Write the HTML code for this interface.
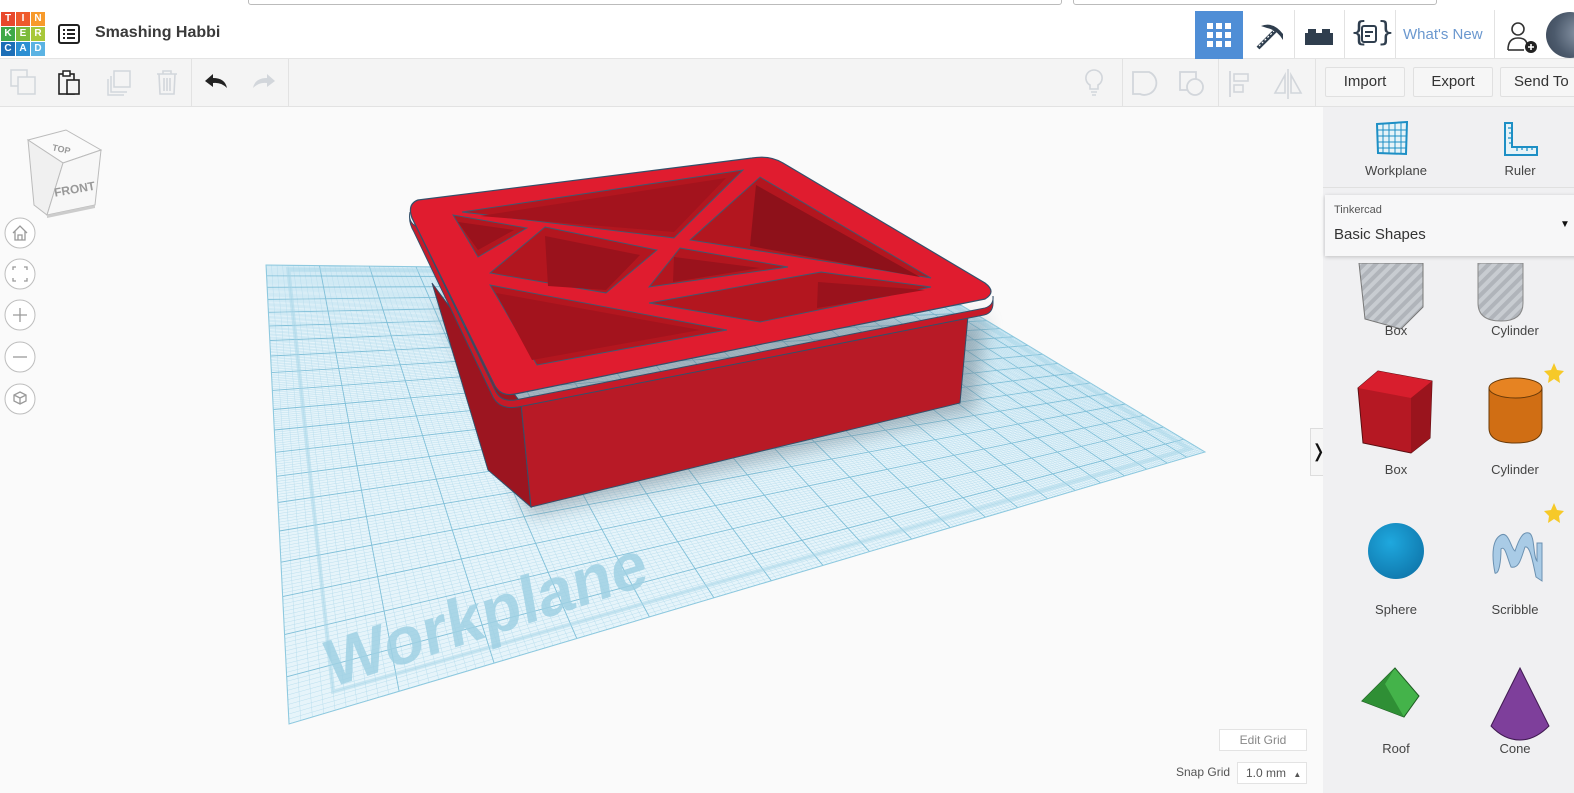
<!DOCTYPE html>
<html><head><meta charset="utf-8">
<style>
*{box-sizing:border-box;margin:0;padding:0}
body{width:1574px;height:793px;overflow:hidden;background:#fafafa;font-family:"Liberation Sans",sans-serif;position:relative}
.abs{position:absolute}
.top{left:0;top:0;width:1574px;height:10px;background:#fff}
.hdr{left:0;top:10px;width:1574px;height:49px;background:#fff;border-bottom:1px solid #e4e4e4}
.tb{left:0;top:59px;width:1574px;height:48px;background:#f4f4f4;border-bottom:1px solid #e2e2e2}
.logo div{position:absolute;width:14px;height:14px;color:#fff;font-size:10px;font-weight:bold;text-align:center;line-height:14px}
.btn{position:absolute;top:8px;height:30px;border:1px solid #e0e0e0;background:#f6f6f6;font-size:15px;color:#333;text-align:center;line-height:28px;border-radius:2px}
.panel{left:1323px;top:107px;width:251px;height:686px;background:#f0f0f2}
.lbl{position:absolute;font-size:13px;color:#444;text-align:center;width:100px}
.sep{position:absolute;width:1px;background:#e2e2e2}
</style></head><body>
<div class="abs top">
  <div class="abs" style="left:248px;top:-6px;width:814px;height:11px;border:1px solid #bbb;border-radius:3px;background:#fff"></div>
  <div class="abs" style="left:1073px;top:-6px;width:364px;height:11px;border:1px solid #bbb;border-radius:3px;background:#fff"></div>
</div>
<div class="abs hdr">
  <div class="abs logo" style="left:1px;top:2px;width:45px;height:45px">
    <div style="left:0;top:0;background:#e8492c">T</div><div style="left:15px;top:0;background:#ef5a2b">I</div><div style="left:30px;top:0;background:#f79a2b">N</div>
    <div style="left:0;top:15px;background:#3fa948">K</div><div style="left:15px;top:15px;background:#7dbb3b">E</div><div style="left:30px;top:15px;background:#a8c83a">R</div>
    <div style="left:0;top:30px;background:#1d6fb7">C</div><div style="left:15px;top:30px;background:#2c8fd2">A</div><div style="left:30px;top:30px;background:#5bb3e3">D</div>
  </div>
  <svg class="abs" style="left:58px;top:14px" width="22" height="20" viewBox="0 0 22 20"><rect x="1" y="1" width="20" height="18" rx="2" fill="none" stroke="#222" stroke-width="2"/><g fill="#222"><rect x="5" y="5" width="2" height="2"/><rect x="9" y="5" width="8" height="2"/><rect x="5" y="9" width="2" height="2"/><rect x="9" y="9" width="8" height="2"/><rect x="5" y="13" width="2" height="2"/><rect x="9" y="13" width="8" height="2"/></g></svg>
  <div class="abs" style="left:95px;top:14px;font-size:16px;font-weight:bold;color:#3a3a3a">Smashing Habbi</div>
  <div class="abs" style="left:1195px;top:1px;width:48px;height:48px;background:#4f8ed6">
    <svg style="position:absolute;left:12px;top:12px" width="24" height="24"><g fill="#fff"><rect x="0" y="0" width="6" height="6"/><rect x="9" y="0" width="6" height="6"/><rect x="18" y="0" width="6" height="6"/><rect x="0" y="9" width="6" height="6"/><rect x="9" y="9" width="6" height="6"/><rect x="18" y="9" width="6" height="6"/><rect x="0" y="18" width="6" height="6"/><rect x="9" y="18" width="6" height="6"/><rect x="18" y="18" width="6" height="6"/></g></svg>
  </div>
  <svg class="abs" style="left:1255px;top:12px" width="32" height="28" viewBox="0 0 32 28"><path d="M3 26 L20 9" stroke="#2f3e4e" stroke-width="4"/><path d="M6 4 Q18 -1 28 12 L28 18 Q22 8 12 6 Z" fill="#2f3e4e"/><path d="M4 24 L19 9" stroke="#fff" stroke-width="1.2" stroke-dasharray="2 2"/></svg>
  <div class="sep" style="left:1294px;top:0;height:48px"></div>
  <svg class="abs" style="left:1305px;top:19px" width="28" height="16"><rect x="0" y="4" width="28" height="12" fill="#2f3e4e"/><rect x="3" y="0" width="8" height="5" fill="#2f3e4e"/><rect x="17" y="0" width="8" height="5" fill="#2f3e4e"/></svg>
  <div class="sep" style="left:1344px;top:0;height:48px"></div>
  <div class="abs" style="left:1350px;top:5px;font-size:28px;color:#2f3e4e;font-family:'DejaVu Sans',sans-serif">{</div>
  <svg class="abs" style="left:1361px;top:15px" width="16" height="18"><rect x="1" y="1" width="14" height="16" rx="2" fill="none" stroke="#2f3e4e" stroke-width="2"/><rect x="4" y="6" width="8" height="2" fill="#2f3e4e"/><rect x="4" y="10" width="5" height="2" fill="#2f3e4e"/></svg>
  <div class="abs" style="left:1377px;top:5px;font-size:28px;color:#2f3e4e;font-family:'DejaVu Sans',sans-serif">}</div>
  <div class="sep" style="left:1395px;top:0;height:48px"></div>
  <div class="abs" style="left:1403px;top:16px;font-size:15px;color:#6b98cf">What's New</div>
  <div class="sep" style="left:1494px;top:0;height:48px"></div>
  <svg class="abs" style="left:1506px;top:10px" width="34" height="34" viewBox="0 0 34 34"><circle cx="12" cy="9" r="6" fill="none" stroke="#333" stroke-width="1.6"/><path d="M2 30 Q2 18 12 18 Q20 18 21 24" fill="none" stroke="#333" stroke-width="1.6"/><path d="M2 30 L18 30" stroke="#333" stroke-width="1.6"/><circle cx="25" cy="27" r="6" fill="#222"/><path d="M25 24v6M22 27h6" stroke="#fff" stroke-width="1.6"/></svg>
  <div class="abs" style="left:1546px;top:2px;width:48px;height:46px;border-radius:50%;background:radial-gradient(circle at 70% 45%,#8a97a8,#4c5a6c 60%,#3a4656)"></div>
</div>
<div class="abs tb">
  <svg class="abs" style="left:10px;top:10px" width="28" height="28"><rect x="1" y="1" width="16" height="16" fill="none" stroke="#d2d6db" stroke-width="1.5"/><rect x="8" y="8" width="17" height="17" fill="#f4f4f4" stroke="#d2d6db" stroke-width="1.5"/></svg>
  <svg class="abs" style="left:57px;top:10px" width="26" height="28"><rect x="2" y="5" width="15" height="20" fill="none" stroke="#222" stroke-width="1.6"/><rect x="6" y="2" width="7" height="5" fill="#fff" stroke="#222" stroke-width="1.5"/><rect x="10" y="11" width="12" height="14" fill="#f4f4f4" stroke="#222" stroke-width="1.6"/></svg>
  <svg class="abs" style="left:104px;top:10px" width="28" height="28"><path d="M4 10 L4 26 L20 26" fill="none" stroke="#d2d6db" stroke-width="1.5"/><path d="M7 7 L7 23 L23 23" fill="none" stroke="#d2d6db" stroke-width="1.5"/><rect x="10" y="2" width="16" height="16" fill="none" stroke="#d2d6db" stroke-width="1.5"/></svg>
  <svg class="abs" style="left:155px;top:9px" width="24" height="28"><path d="M2 6h20M8 6V3h8v3M4 6l1 20h14l1-20M9 10v13M12 10v13M15 10v13" fill="none" stroke="#d2d6db" stroke-width="1.6"/></svg>
  <div class="sep" style="left:191px;top:0;height:47px"></div>
  <svg class="abs" style="left:203px;top:14px" width="26" height="18"><path d="M10 1 L2 8 L10 14 L10 10 Q18 9 24 15 Q22 5 10 5 Z" fill="#222"/></svg>
  <svg class="abs" style="left:251px;top:14px" width="26" height="18"><path d="M16 1 L24 8 L16 14 L16 10 Q8 9 2 15 Q4 5 16 5 Z" fill="#d2d6db"/></svg>
  <div class="sep" style="left:288px;top:0;height:47px"></div>
  <svg class="abs" style="left:1082px;top:9px" width="24" height="30"><path d="M12 2 A8 8 0 0 1 16 17 L16 21 L8 21 L8 17 A8 8 0 0 1 12 2 Z M9 24h6M10 27h4" fill="none" stroke="#d2d6db" stroke-width="1.6"/></svg>
  <div class="sep" style="left:1122px;top:0;height:47px"></div>
  <svg class="abs" style="left:1131px;top:11px" width="28" height="28"><path d="M2 2 H18 A9 9 0 1 1 9 24 H2 Z" fill="none" stroke="#d2d6db" stroke-width="1.8"/></svg>
  <svg class="abs" style="left:1178px;top:11px" width="28" height="28"><rect x="2" y="2" width="16" height="18" fill="none" stroke="#d2d6db" stroke-width="1.8"/><circle cx="17" cy="17" r="8" fill="#f4f4f4" stroke="#d2d6db" stroke-width="1.8"/></svg>
  <div class="sep" style="left:1218px;top:0;height:47px"></div>
  <svg class="abs" style="left:1228px;top:12px" width="26" height="26"><path d="M2 0v26" stroke="#d2d6db" stroke-width="1.8"/><rect x="6" y="3" width="14" height="7" fill="none" stroke="#d2d6db" stroke-width="1.6"/><rect x="6" y="14" width="9" height="7" fill="none" stroke="#d2d6db" stroke-width="1.6"/></svg>
  <svg class="abs" style="left:1272px;top:10px" width="32" height="30"><path d="M16 0v30" stroke="#d2d6db" stroke-width="1.6"/><path d="M13 6 L3 24 L13 24 Z M19 6 L29 24 L19 24 Z" fill="none" stroke="#d2d6db" stroke-width="1.6"/></svg>
  <div class="sep" style="left:1315px;top:0;height:47px"></div>
  <div class="btn" style="left:1325px;width:80px">Import</div>
  <div class="btn" style="left:1413px;width:80px">Export</div>
  <div class="btn" style="left:1500px;width:80px;text-align:left;padding-left:13px">Send To</div>
</div>

<svg class="abs" style="left:0;top:107px" width="1323" height="686" viewBox="0 107 1323 686">
 <defs>
  <filter id="blur" x="-20%" y="-20%" width="140%" height="140%"><feGaussianBlur stdDeviation="9"/></filter>
  <clipPath id="wp"><polygon points="266,265 906,272 1205,452 289,724"/></clipPath>
 </defs>
 <polygon points="266,265 906,272 1205,452 289,724" fill="#e6f4fa"/>
 <g id="grid" clip-path="url(#wp)"></g>
 <polygon points="266,265 906,272 1205,452 289,724" fill="none" stroke="#8ec9df" stroke-width="1"/>
 <text x="0" y="0" transform="translate(330,688) rotate(-18) skewX(-8)" font-family="Liberation Sans" font-weight="bold" font-size="66" fill="#9fd0e3" fill-opacity="0.85">Workplane</text>
 <polygon points="440,300 530,515 975,410 985,320" fill="#6a7a85" opacity="0.5" filter="url(#blur)"/>
 <polygon points="432,283 521,403 531,507 488,470" fill="#9c1520" stroke="#34506a" stroke-width="1"/>
 <polygon points="521,403 968,316 960,403 531,507" fill="#b81a26" stroke="#34506a" stroke-width="1"/>
 <path d="M410,212 Q408,222 416,226 L495,390 Q500,402 515,400 L985,308 Q994,305 993,296 L993,303 Q993,313 984,315 L518,407 Q500,410 493,397 L414,232 Q408,222 410,212Z" fill="#c71a28" stroke="#34506a" stroke-width="1"/>
 <path d="M418,200 L752,158 Q770,155 783,163 L985,283 Q997,292 985,299 L515,394 Q500,397 494,384 L412,218 Q407,204 418,200Z" fill="#e01c2f" stroke="#34506a" stroke-width="1.2"/>
 <g stroke="#3d5a72" stroke-width="0.9">
  <polygon points="462,212 743,170 674,238" fill="#b3161f"/>
  <polygon points="480,216 726,178 674,232" fill="#a3131d" stroke="none"/>
  <polygon points="760,177 931,278 690,240" fill="#b3161f"/>
  <polygon points="756,185 750,246 920,277" fill="#8e111a" stroke="none"/>
  <polygon points="453,215 527,228 478,257" fill="#b3161f"/>
  <polygon points="458,222 514,230 478,250" fill="#9a121c" stroke="none"/>
  <polygon points="545,227 657,250 606,293 490,273" fill="#b3161f"/>
  <polygon points="545,236 548,286 606,290 640,255" fill="#9a121c" stroke="none"/>
  <polygon points="680,248 788,267 649,287" fill="#b3161f"/>
  <polygon points="674,257 673,282 760,268" fill="#9a121c" stroke="none"/>
  <polygon points="821,272 931,287 760,322 649,303" fill="#b3161f"/>
  <polygon points="818,282 817,308 925,290" fill="#9a121c" stroke="none"/>
  <polygon points="490,285 727,330 537,365" fill="#b3161f"/>
  <polygon points="496,293 532,360 700,330" fill="#a3131d" stroke="none"/>
 </g>
 <g>
  <polygon points="28,140 66,130 101,150 63,163" fill="#fafafa" stroke="#bbb"/>
  <polygon points="28,140 63,163 47,215 34,205" fill="#f0f0f0" stroke="#bbb"/>
  <polygon points="63,163 101,150 95,205 47,215" fill="#f7f7f7" stroke="#bbb"/>
  <text x="52" y="152" font-size="9" fill="#999" font-weight="bold" transform="rotate(12 60 150)">TOP</text>
  <text x="54" y="194" font-size="12" fill="#999" font-weight="bold" transform="rotate(-10 70 190)">FRONT</text>
  <polygon points="47,215 95,205 95,208 47,218" fill="#ccc"/>
 </g>
 <g fill="#fff" stroke="#bdbdbd" stroke-width="1">
  <circle cx="20" cy="233" r="15"/><circle cx="20" cy="274" r="15"/><circle cx="20" cy="315" r="15"/><circle cx="20" cy="357" r="15"/><circle cx="20" cy="399" r="15"/>
 </g>
 <g fill="none" stroke="#9a9a9a" stroke-width="1.3">
  <path d="M13 233 L20 226 L27 233 M15 231 V240 H25 V231 M18 240 V235 H22 V240"/>
  <path d="M13 270v-3h3 M24 267h3v3 M27 278v3h-3 M16 281h-3v-3"/>
  <path d="M20 308v14 M13 315h14"/>
  <path d="M13 357h14"/>
  <path d="M20 392 l6 3 v6 l-6 3 l-6 -3 v-6 z M14 395 l6 3 l6 -3 M20 398 v6"/>
 </g>
</svg>

<div class="abs" style="left:1219px;top:729px;width:88px;height:22px;background:#fff;border:1px solid #e3e3e3;font-size:12px;color:#888;text-align:center;line-height:20px">Edit Grid</div>
<div class="abs" style="left:1176px;top:765px;font-size:12px;color:#555">Snap Grid</div>
<div class="abs" style="left:1237px;top:762px;width:70px;height:22px;background:#fff;border:1px solid #e3e3e3;font-size:12px;color:#555;line-height:20px;padding-left:8px">1.0 mm <span style="font-size:8px;margin-left:4px">▲</span></div>
<div class="abs" style="left:1310px;top:428px;width:14px;height:48px;background:#f6f6f6;border:1px solid #ddd;border-right:none;font-size:18px;line-height:44px;text-align:center;color:#111">&#x276D;</div>

<div class="abs panel">
  <svg class="abs" style="left:51px;top:14px" width="36" height="36" viewBox="0 0 36 36"><path d="M3 3 L33 1 L32 33 L4 32 Z" fill="#e6f3f8" stroke="#1d8fc5" stroke-width="2"/><g stroke="#1d8fc5" stroke-width="1"><path d="M3.5 9H33M3.5 15H33M3.5 21H32.5M4 27H32.5M9 2.5V32M15 2V32.5M21 2V32.5M27 1.5V33"/></g></svg>
  <svg class="abs" style="left:180px;top:14px" width="36" height="38" viewBox="0 0 36 38"><path d="M2 2 H9 V26 H34 V34 H2 Z" fill="#e6f3f8" stroke="#1d8fc5" stroke-width="2"/><path d="M9 7H5M9 12H6M9 17H5M9 22H6M14 26v4M19 26v3M24 26v4M29 26v3" stroke="#1d8fc5" stroke-width="1.3"/></svg>
  <div class="lbl" style="left:23px;top:56px">Workplane</div>
  <div class="lbl" style="left:147px;top:56px">Ruler</div>
  <div class="abs" style="left:0;top:80px;width:251px;height:1px;background:#e0e0e0"></div>
  <svg class="abs" style="left:0;top:156px" width="251" height="530">
   <defs>
    <pattern id="st" width="8" height="8" patternUnits="userSpaceOnUse" patternTransform="rotate(45)"><rect width="8" height="8" fill="#b0b4ba"/><rect width="4" height="8" fill="#c8ccd1"/></pattern>
    <radialGradient id="sph" cx="0.4" cy="0.35" r="0.7"><stop offset="0" stop-color="#1fa8de"/><stop offset="1" stop-color="#0f78ad"/></radialGradient>
   </defs>
   <polygon points="36,0 100,0 100,44 78,66 42,56" fill="url(#st)" stroke="#777"/>
   <path d="M155,0 H200 V40 Q200,58 178,58 Q155,58 155,40 Z" fill="url(#st)" stroke="#888"/>
   <polygon points="35,125 55,108 109,118 107,175 88,190 40,180" fill="#b51823" stroke="#5a0e12"/>
   <polygon points="35,125 55,108 109,118 88,135" fill="#d81e2d"/>
   <polygon points="88,135 109,118 107,175 88,190" fill="#9a141d"/>
   <path d="M166,125 V165 Q166,180 192,180 Q219,180 219,165 V125 Z" fill="#d06e14" stroke="#6a3a08"/>
   <ellipse cx="192.5" cy="125" rx="26.5" ry="10" fill="#e68322" stroke="#6a3a08"/>
   <polygon points="231,100 234,107 241,108 236,113 237,120 231,116 225,120 226,113 221,108 228,107" fill="#f6c928"/>
   <polygon points="231,240 234,247 241,248 236,253 237,260 231,256 225,260 226,253 221,248 228,247" fill="#f6c928"/>
   <circle cx="73" cy="288" r="28" fill="url(#sph)"/>
   <g transform="translate(0,36)">
   <path d="M172,274 C168,254 170,240 178,236 C186,232 188,250 192,252 C196,240 200,232 206,234 C212,236 210,258 214,262 V244 H219 V282 L213 278 C210,264 207,246 202,248 C198,260 196,270 188,268 C184,258 182,246 178,250 C178,262 176,276 172,274Z" fill="#a9cbe6" stroke="#6b91b1"/>
   </g>
   <g transform="translate(0,63)">
   <polygon points="39,375 72,342 96,370 81,391" fill="#44b34a" stroke="#1e5a22"/>
   <polygon points="39,375 54,360 72,342 62,358 81,391" fill="#2f8f35"/>
   <path d="M197,342 L226,400 Q212,414 197,414 Q181,414 168,400 Z" fill="#7e3f9b" stroke="#3f1a50"/>
   </g>
  </svg>
  <div class="abs" style="left:2px;top:88px;width:255px;height:61px;background:#f7f7f8;box-shadow:0 1px 4px rgba(0,0,0,.2)">
    <div class="abs" style="left:9px;top:9px;font-size:11px;color:#555">Tinkercad</div>
    <div class="abs" style="left:9px;top:31px;font-size:15px;color:#333">Basic Shapes</div>
    <div class="abs" style="left:235px;top:24px;font-size:10px;color:#111">▼</div>
  </div>
  <div class="lbl" style="left:23px;top:216px">Box</div>
  <div class="lbl" style="left:142px;top:216px">Cylinder</div>
  <div class="lbl" style="left:23px;top:355px">Box</div>
  <div class="lbl" style="left:142px;top:355px">Cylinder</div>
  <div class="lbl" style="left:23px;top:495px">Sphere</div>
  <div class="lbl" style="left:142px;top:495px">Scribble</div>
  <div class="lbl" style="left:23px;top:634px">Roof</div>
  <div class="lbl" style="left:142px;top:634px">Cone</div>
</div>

<script>
(function(){
 var TL=[266,265],TR=[906,272],BR=[1205,452],BL=[289,724];
 function H(){var x0=TL[0],y0=TL[1],x1=TR[0],y1=TR[1],x2=BR[0],y2=BR[1],x3=BL[0],y3=BL[1];
  var dx1=x1-x2,dx2=x3-x2,dx3=x0-x1+x2-x3,dy1=y1-y2,dy2=y3-y2,dy3=y0-y1+y2-y3;
  var den=dx1*dy2-dx2*dy1,g=(dx3*dy2-dx2*dy3)/den,h=(dx1*dy3-dx3*dy1)/den;
  return [x1-x0+g*x1,x3-x0+h*x3,x0,y1-y0+g*y1,y3-y0+h*y3,y0,g,h];}
 var m=H();
 function P(u,v){var w=m[6]*u+m[7]*v+1;return [(m[0]*u+m[1]*v+m[2])/w,(m[3]*u+m[4]*v+m[5])/w];}
 var g=document.getElementById('grid'),s='';
 function ln(a,b,c,w){s+='<line x1="'+a[0].toFixed(1)+'" y1="'+a[1].toFixed(1)+'" x2="'+b[0].toFixed(1)+'" y2="'+b[1].toFixed(1)+'" stroke="'+c+'" stroke-width="'+w+'"/>';}
 var N=200;
 for(var i=0;i<=N;i++){var t=i/N;if(i%10==0)continue;ln(P(t,0),P(t,1),'#b7dded',0.45);ln(P(0,t),P(1,t),'#b7dded',0.45);}
 for(var i=0;i<=N;i+=10){var t=i/N;ln(P(t,0),P(t,1),'#7fbfd8',0.9);ln(P(0,t),P(1,t),'#7fbfd8',0.9);}
 var b=0.02;var q=[P(b,b),P(1-b,b),P(1-b,1-b),P(b,1-b)];
 s+='<polygon points="'+q.map(function(p){return p[0]+','+p[1]}).join(' ')+'" fill="none" stroke="#a7d6e8" stroke-width="4" opacity=".5"/>';
 g.innerHTML=s;
})();
</script>
</body></html>
